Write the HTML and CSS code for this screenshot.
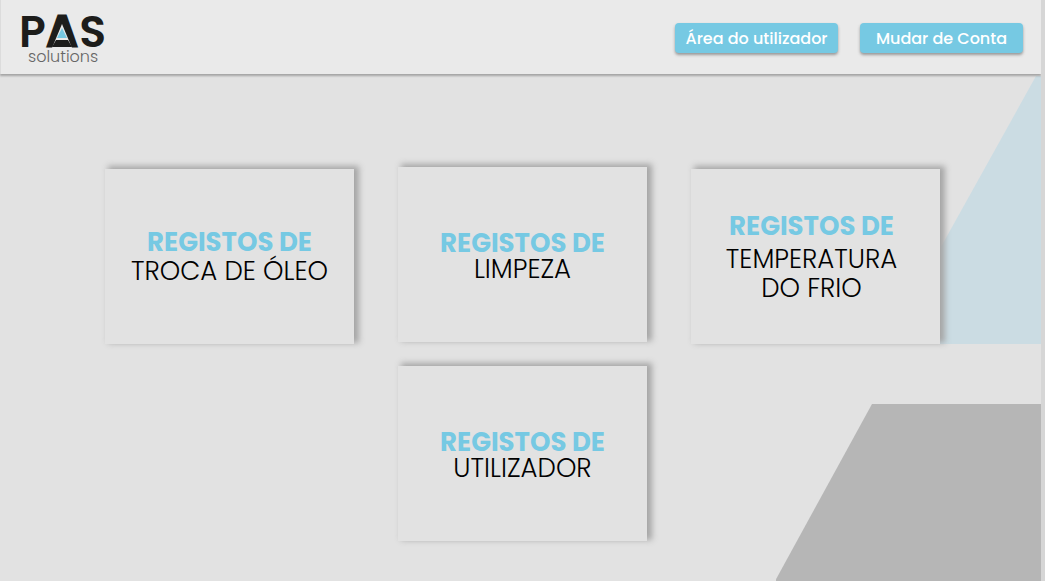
FILE: index.html
```html
<!DOCTYPE html>
<html lang="pt">
<head>
<meta charset="utf-8">
<meta name="viewport" content="width=device-width, initial-scale=1">
<title>PAS solutions</title>
<link rel="stylesheet" href="styles.css">
</head>
<body class="page">
<header class="header">
  <svg class="logo" viewBox="0 0 88 52" role="img" aria-label="PAS solutions">
    <g class="logo-name">
      <text x="-2" y="35">P</text>
      <text class="logo-peak" x="41" y="34" text-anchor="middle">A</text>
      <text x="85" y="35" text-anchor="end">S</text>
    </g>
    <polygon class="logo-gap" points="41,12 51,36 31,36"/>
    <polygon class="logo-bar" points="35,28 47,28 51,35 31,35"/>
    <polygon class="logo-drop" points="41,16 46,26 36,26"/>
    <text class="logo-sub" x="7" y="50">solutions</text>
  </svg>
  <nav class="actions">
    <button class="action" type="button">Área do utilizador</button>
    <button class="action" type="button">Mudar de Conta</button>
  </nav>
</header>
<main class="main">
  <svg class="backdrop" viewBox="0 0 265 505" aria-hidden="true">
    <polygon class="shape-blue" points="260,0 265,0 265,268 111,268"/>
    <polygon class="shape-gray" points="96,328 265,328 265,505 -1,505"/>
  </svg>
  <div class="board">
    <div class="column column-side">
      <a class="card" href="#oleo"><strong class="card-title">REGISTOS DE</strong><span class="card-text">TROCA DE ÓLEO</span></a>
    </div>
    <div class="column">
      <a class="card card-tight" href="#limpeza"><strong class="card-title">REGISTOS DE</strong><span class="card-text">LIMPEZA</span></a>
      <a class="card card-tight" href="#utilizador"><strong class="card-title">REGISTOS DE</strong><span class="card-text">UTILIZADOR</span></a>
    </div>
    <div class="column column-side">
      <a class="card card-tall" href="#frio"><strong class="card-title">REGISTOS DE</strong><span class="card-text">TEMPERATURA<br>DO FRIO</span></a>
    </div>
  </div>
</main>
</body>
</html>
```
FILE: styles.css
```css
* { box-sizing: border-box; }

.page {
  margin: 0;
  min-height: 100vh;
  display: flex;
  flex-direction: column;
  background: #e2e2e2;
  border-right: 4px solid #d6d6d6;
  font-family: Poppins, Inter, sans-serif;
}

.header {
  position: relative;
  z-index: 1;
  display: flex;
  justify-content: space-between;
  align-items: center;
  padding: 12px 18px 10px 20px;
  background: #eaeaea;
  border-left: 1px solid #dcdcdc;
  box-shadow: 0 2px 2px #a4a4a4;
}

.logo { width: 88px; height: 52px; overflow: visible; }
.logo-name { font-size: 44px; font-weight: 600; fill: #1d1d1b; }
.logo-peak { font-size: 42px; stroke: #1d1d1b; stroke-width: 3px; }
.logo-gap { fill: #eaeaea; }
.logo-bar { fill: #1d1d1b; }
.logo-drop { fill: #76c9e3; }
.logo-sub { font-size: 16px; font-weight: 300; fill: #666; }

.actions { display: flex; gap: 22px; }

.action {
  min-width: 163px;
  height: 30px;
  padding: 1px 8px 0;
  border: 0;
  border-radius: 4px;
  background: #76c9e3;
  box-shadow: 0 2px 3px #999;
  color: #fff;
  font: 500 16px/30px Poppins, Inter, sans-serif;
  white-space: nowrap;
}

.main {
  position: relative;
  flex: 1;
  padding: 93px 20px 40px 24px;
  overflow: hidden;
}

.backdrop { position: absolute; top: 2px; right: 0; width: 265px; height: 505px; }
.shape-blue { fill: #cbdce3; }
.shape-gray { fill: #b6b6b6; }

.board {
  position: relative;
  display: grid;
  grid-template-columns: repeat(3, minmax(0, 249px));
  justify-content: center;
  align-items: start;
  gap: 44px;
}

.column { display: grid; gap: 24px; }
.column-side { padding-top: 2px; }

.card {
  display: flex;
  flex-direction: column;
  align-items: center;
  justify-content: center;
  min-height: 175px;
  background: #e2e2e2;
  box-shadow: 4px -2px 6px 1px #a6a6a6;
  color: #000;
  font-size: 26px;
  line-height: 29px;
  text-align: center;
  text-decoration: none;
}

.card-title { color: #76c9e3; font-weight: 700; }
.card-text { font-weight: 300; }
.card-tight { padding-top: 2px; line-height: 26px; }
.card-tall { gap: 4px; padding: 2px 8px 0 0; }
```
